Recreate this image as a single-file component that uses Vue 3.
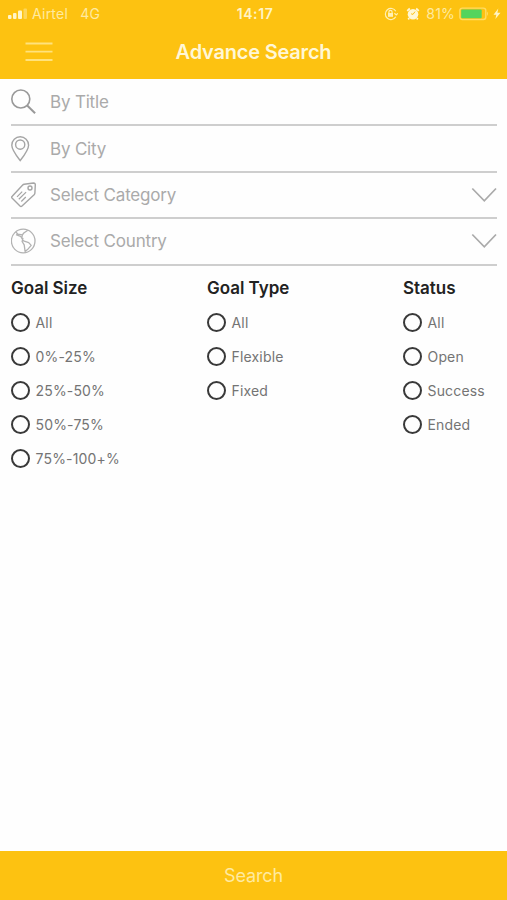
<script setup>
const groups = [
  { title: 'Goal Size', options: ['All', '0%-25%', '25%-50%', '50%-75%', '75%-100+%'] },
  { title: 'Goal Type', options: ['All', 'Flexible', 'Fixed'] },
  { title: 'Status', options: ['All', 'Open', 'Success', 'Ended'] },
]
const fields = [
  { icon: 'search', label: 'By Title' },
  { icon: 'pin', label: 'By City' },
  { icon: 'tag', label: 'Select Category', select: true },
  { icon: 'globe', label: 'Select Country', select: true },
]
</script>

<template>
  <div class="screen">
    <header class="header">
      <div class="status">
        <div class="side">
          <svg class="signal" width="20" height="12" viewBox="0 0 20 12">
            <rect x="0" y="7" width="3.5" height="4" rx="1" />
            <rect x="5" y="5" width="3.5" height="6" rx="1" />
            <rect x="10" y="2.5" width="4" height="8.5" rx="1" />
            <rect x="15.5" y="0.5" width="3.5" height="10.5" rx="1" opacity=".4" />
          </svg>
          <span class="carrier">Airtel</span>
          <span class="network">4G</span>
        </div>
        <span class="clock">14:17</span>
        <div class="side right">
          <svg width="14" height="14" viewBox="0 0 14 14" fill="none" stroke="#fff0b5" stroke-width="1.2">
            <path d="M11.8 4.2A5.6 5.6 0 1 0 11.8 9.8M10.4 6.3l1.8 1.7 1.6-1.7" />
            <path d="M4.9 6.3V5a1.6 1.6 0 0 1 3.2 0v1.3" />
            <rect x="4" y="6" width="5" height="3.8" fill="#fff0b5" stroke="none" />
          </svg>
          <svg class="alarm" width="14" height="14" viewBox="0 0 14 14">
            <circle cx="7" cy="7.2" r="5.3" fill="#fff7d5" />
            <path d="M1.2 3.8 3.8 1.5M10.2 1.5 12.8 3.8M3.2 11.2 2.2 12.4M10.8 11.2l1 1.2" stroke="#fff7d5" stroke-width="1.8" />
            <path d="M9 4.6 7 7.4 5.1 6.8" fill="none" stroke="#fdc215" stroke-width="1" />
          </svg>
          <span class="percent">81%</span>
          <svg class="battery" width="30" height="14" viewBox="0 0 30 14">
            <rect x="0.8" y="1.1" width="26" height="11.4" rx="2.5" fill="none" stroke="#ffdc62" stroke-width="1.4" />
            <rect x="2.2" y="2.6" width="20.5" height="8.6" rx="1" fill="#54d45d" />
            <path d="M28 4.5q2 2.2 0 4.5z" fill="#ffdc62" />
          </svg>
          <svg class="bolt" width="8" height="12" viewBox="0 0 8 12"><path d="M5.3.5.5 6.7h2.8L2.4 11 7.5 4.8H4.4z" fill="#fff4c5" /></svg>
        </div>
      </div>
      <div class="nav">
        <svg class="menu" width="28" height="22" viewBox="0 0 28 22">
          <path d="M.5 2.5h27M.5 10.7h27M.5 19h27" stroke="#ffe27c" stroke-width="1.8" />
        </svg>
        <h1>Advance Search</h1>
      </div>
    </header>

    <main>
      <div class="fields">
        <div v-for="f in fields" :key="f.label" class="field">
          <div class="icon">
            <svg v-if="f.icon === 'search'" width="26" height="28" viewBox="0 0 26 28" stroke="#999" stroke-width="1.6">
              <circle cx="9.8" cy="11" r="9" /><path d="m16.2 17.5 7.9 7.8" stroke-width="2" />
            </svg>
            <svg v-else-if="f.icon === 'pin'" width="26" height="28" viewBox="0 0 26 28" stroke="#a5a5a5" stroke-width="1.4">
              <path d="M9.2 25.6C5.3 20.5.8 14.8.8 10.2a8.4 8.4 0 0 1 16.8 0C17.6 14.8 13.1 20.5 9.2 25.6Z" /><circle cx="9.2" cy="9.6" r="4.6" />
            </svg>
            <svg v-else-if="f.icon === 'tag'" width="26" height="28" viewBox="0 0 26 28" stroke="#a5a5a5" stroke-width="1.4" stroke-linejoin="round">
              <path d="M13.2 3.2 22.5 2q1.8 0 1.8 1.8l-.4 8.2q-.1 1-.8 1.7L11 25q-1 .9-2 0L1 17q-.7-.9.2-1.8L11.7 4q.6-.6 1.5-.8Z" />
              <circle cx="19" cy="7" r="2" /><path d="m6 15.8 5.2-5.2M7.8 18.3l7.3-7.2M10.3 20.5l4.5-4.5" stroke-width="1.2" />
            </svg>
            <svg v-else width="26" height="28" viewBox="0 0 26 28" stroke="#b2b2b2" stroke-width="1.3" stroke-linejoin="round">
              <circle cx="12.2" cy="14" r="11.8" />
              <path d="M4.8 5 7 7.2l4.4.7-.7 3.2 1.8 2.8 5.2 1.7 2.5 2.8-3.7 4.2-2.4 1.8-.9-6.5-2.1-3.4.8-2.9-3-2.5L5 7.7M16.8 3.2l-4 2.8-1.4 1.9" />
            </svg>
          </div>
          <span>{{ f.label }}</span>
          <svg v-if="f.select" class="chevron" width="26" height="16" viewBox="0 0 26 16"><path d="m1.3 1.5 12 12.3L25 1.5" /></svg>
        </div>
      </div>
      <div class="groups">
        <section v-for="g in groups" :key="g.title">
          <h2>{{ g.title }}</h2>
          <div v-for="o in g.options" :key="o" class="option">
            <span class="radio"></span><span>{{ o }}</span>
          </div>
        </section>
      </div>
    </main>
    <div class="submit">Search</div>
  </div>
</template>

<style>
body { margin: 0; background: #fefefe; }
</style>

<style scoped>
.screen { box-sizing: border-box; width: 507px; height: 900px; display: flex; flex-direction: column; overflow: hidden; background: #fefefe; font-family: Inter, "Liberation Sans", sans-serif; }
.header { height: 79px; flex: none; background: #fdc211; }
.status { height: 27px; display: grid; grid-template-columns: 1fr auto 1fr; align-items: center; font-size: 14px; color: #ffeaa0; }
.side { display: flex; align-items: center; padding-left: 8px; }
.right { justify-content: flex-end; padding: 0 6px 0 0; }
.signal { fill: #fff5c9; margin-right: 4px; }
.carrier { letter-spacing: .25px; }
.network { margin-left: 12px; letter-spacing: .3px; }
.clock { font-weight: 600; color: #fff4c7; letter-spacing: .6px; padding-left: 3px; }
.alarm { margin-left: 8px; }
.percent { margin-left: 6px; letter-spacing: .2px; }
.battery { margin-left: 4px; }
.bolt { margin-left: 4px; }
.nav { height: 50px; display: grid; grid-template-columns: 1fr auto 1fr; align-items: center; }
.menu { margin-left: 25px; }
h1 { margin: 0; font-size: 20px; line-height: 24px; font-weight: 600; color: #fff7d6; letter-spacing: -.2px; }
main { flex: 1; padding: 1px 10px 0 11px; }
.field { height: 46.4px; box-sizing: border-box; border-bottom: 2px solid #cecece; display: flex; align-items: center; color: #aaa; font-size: 17px; letter-spacing: -.19px; }
.icon { width: 39px; height: 28px; }
.icon svg { fill: none; display: block; }
.chevron { margin-left: auto; fill: none; stroke: #aaa; stroke-width: 1.7; }
.groups { display: grid; grid-template-columns: 196px 196px auto; padding-top: 10px; }
h2 { margin: 0 0 12px; font-size: 17px; line-height: 24px; font-weight: 600; color: #222; letter-spacing: -.03px; }
.option { height: 34.2px; display: flex; align-items: flex-start; gap: 5.5px; font-size: 14px; line-height: 22px; color: #747474; letter-spacing: .17px; }
.radio { box-sizing: border-box; width: 19px; height: 19px; border: 2px solid #393939; border-radius: 50%; margin-top: 1px; }
.submit { height: 49px; flex: none; background: #fdc211; color: #ffeaa0; font-size: 18px; line-height: 49px; letter-spacing: -.15px; text-align: center; }
</style>
